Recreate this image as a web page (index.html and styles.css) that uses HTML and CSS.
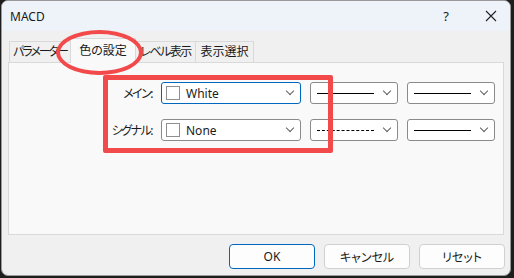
FILE: index.html
```
<!DOCTYPE html>
<html>

<head>
    <meta charset="UTF-8">
    <title>MACD</title>
    <link rel="stylesheet" href="styles.css">
</head>

<body>
    <!-- dialog window -->
    <div class="window">
        <div class="titlebar">
            <span class="title">MACD</span>
            <span class="help">?</span>
            <svg class="close" width="12" height="12" viewBox="0 0 12 12">
                <path d="M1 1 L11 11 M11 1 L1 11" stroke="#222" stroke-width="1.1" fill="none" />
            </svg>
        </div>

        <div class="body">
            <!-- tabs -->
            <div class="tabs">
                <div class="tab tab-params">パラメーター</div>
                <div class="tab active">色の設定</div>
                <div class="tab tab-levels">レベル表示</div>
                <div class="tab tab-show">表示選択</div>
            </div>

            <!-- tab panel -->
            <div class="panel">
                <div class="rows">
                    <div class="label">メイン:</div>
                    <div class="combo color focus">
                        <span class="swatch"></span>
                        <span class="value">White</span>
                        <span class="chevron"></span>
                    </div>
                    <div class="combo line">
                        <span class="sample solid"></span>
                        <span class="chevron"></span>
                    </div>
                    <div class="combo line">
                        <span class="sample solid"></span>
                        <span class="chevron"></span>
                    </div>

                    <div class="label">シグナル:</div>
                    <div class="combo color">
                        <span class="swatch"></span>
                        <span class="value">None</span>
                        <span class="chevron"></span>
                    </div>
                    <div class="combo line">
                        <span class="sample dashed"></span>
                        <span class="chevron"></span>
                    </div>
                    <div class="combo line">
                        <span class="sample solid"></span>
                        <span class="chevron"></span>
                    </div>
                </div>
            </div>

            <!-- buttons -->
            <div class="buttons">
                <button class="button default">OK</button>
                <button class="button">キャンセル</button>
                <button class="button">リセット</button>
            </div>
        </div>

        <!-- red annotations -->
        <div class="mark-ellipse"></div>
        <div class="mark-box"></div>
    </div>
</body>

</html>
```

FILE: styles.css
```
body {
    margin: 0px;
    background-color: #1e1e1e;
}

* {
    box-sizing: border-box;
    font-family: 'Noto Sans', 'Noto Sans CJK JP', sans-serif;
    font-feature-settings: "palt";
}

.window {
    position: relative;
    width: 510px;
    height: 276px;
    margin-left: 1px;
    background-color: #f0f0f0;
    border: 1px solid #9a9a9a;
    border-radius: 7px;
    overflow: hidden;
    display: flex;
    flex-direction: column;
}

.titlebar {
    height: 30px;
    background-color: #eef3f9;
    display: flex;
    align-items: center;
    padding-left: 8px;
    font-size: 12px;
    color: #1a1a1a;
}

.title {
    flex: 1;
}

.help {
    font-size: 13px;
    margin-right: 36px;
}

.close {
    margin-right: 13px;
}

.body {
    flex: 1;
    display: flex;
    flex-direction: column;
    padding: 6px 5px 0 6px;
}

.tabs {
    display: flex;
    align-items: flex-end;
    height: 25px;
    padding-left: 1px;
}

.tab {
    height: 21px;
    font-size: 12px;
    line-height: 19px;
    text-align: center;
    white-space: nowrap;
    color: #1a1a1a;
    background-color: #f0f0f0;
    border: 1px solid #d9d9d9;
    border-bottom: none;
    margin-right: -1px;
}

.tab-params {
    width: 62px;
    letter-spacing: -2px;
}

.tab-levels {
    width: 61px;
    letter-spacing: -1.5px;
}

.tab-show {
    width: 59px;
}

.tab.active {
    width: 66px;
    height: 25px;
    line-height: 23px;
    background-color: #f9f9f9;
    position: relative;
    z-index: 1;
    margin-bottom: -1px;
}

.panel {
    height: 173px;
    margin-right: 1px;
    background-color: #f9f9f9;
    border: 1px solid #d9d9d9;
    padding: 19px 0 0 0;
}

.rows {
    display: grid;
    grid-template-columns: 143px 140px 88px 88px;
    column-gap: 9px;
    row-gap: 15px;
    align-items: center;
}

.label {
    text-align: right;
    font-size: 12px;
    letter-spacing: -1.5px;
    color: #1a1a1a;
    margin-right: 0px;
}

.combo {
    position: relative;
    height: 22px;
    background-color: #ffffff;
    border: 1px solid #8a8a8a;
    border-radius: 3px;
    display: flex;
    align-items: center;
}

.combo.focus {
    border-color: #0067c0;
}

.swatch {
    width: 14px;
    height: 14px;
    border: 1px solid #8f8f8f;
    background-color: #ffffff;
    margin-left: 4px;
}

.value {
    margin-left: 6px;
    font-size: 12px;
    color: #1a1a1a;
}

.sample {
    width: 57px;
    height: 0;
    margin-left: 6px;
}

.sample.solid {
    border-top: 1px solid #000000;
}

.sample.dashed {
    border-top: 1px dashed #000000;
}

.chevron {
    position: absolute;
    right: 7px;
    top: 5px;
    width: 6px;
    height: 6px;
    border-right: 1px solid #606060;
    border-bottom: 1px solid #606060;
    transform: rotate(45deg);
}

.buttons {
    display: flex;
    justify-content: flex-end;
    gap: 9px;
    padding-top: 9px;
}

.button {
    width: 86px;
    height: 25px;
    background-color: #fdfdfd;
    border: 1px solid #d0d0d0;
    border-radius: 4px;
    font-size: 12px;
    color: #1a1a1a;
}

.button.default {
    border-color: #0067c0;
}

.mark-ellipse {
    position: absolute;
    left: 54px;
    top: 29px;
    width: 87px;
    height: 45px;
    border: 4px solid #f24a4a;
    border-radius: 50%;
    z-index: 2;
}

.mark-box {
    position: absolute;
    left: 101px;
    top: 74px;
    width: 230px;
    height: 78px;
    border: 5px solid #f24a4a;
    border-radius: 2px;
    z-index: 2;
}
```
